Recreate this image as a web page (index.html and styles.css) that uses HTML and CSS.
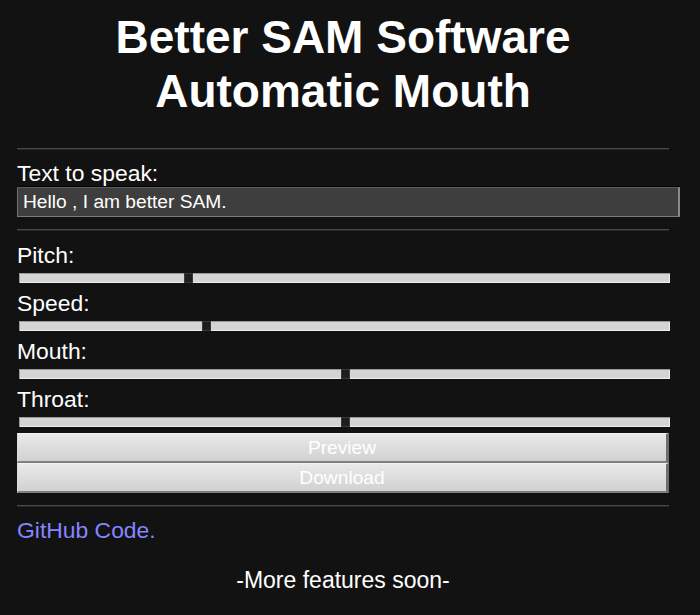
FILE: index.html
```html
<!DOCTYPE html>
<html lang="en">
<head>
<meta charset="utf-8">
<title>Better SAM Software Automatic Mouth</title>
<link rel="stylesheet" href="styles.css">
</head>
<body>
<main class="app">
  <h1 class="title">Better SAM Software<br>Automatic Mouth</h1>
  <hr class="rule rule-top">
  <label class="label label-first" for="text">Text to speak:</label>
  <input class="text-input" id="text" type="text" value="Hello , I am better SAM.">
  <hr class="rule">
  <div class="controls">
    <label class="label" for="pitch">Pitch:</label>
    <input class="slider" id="pitch" type="range" min="0" max="255" step="any" value="65.5">
    <label class="label" for="speed">Speed:</label>
    <input class="slider" id="speed" type="range" min="0" max="255" step="any" value="72.5">
    <label class="label" for="mouth">Mouth:</label>
    <input class="slider" id="mouth" type="range" min="0" max="255" value="128">
    <label class="label" for="throat">Throat:</label>
    <input class="slider" id="throat" type="range" min="0" max="255" value="128">
  </div>
  <div class="buttons">
    <button class="btn btn-preview" type="button">Preview</button>
    <button class="btn" type="button">Download</button>
  </div>
  <hr class="rule">
  <a class="link" href="#">GitHub Code.</a>
  <p class="footer">-More features soon-</p>
</main>
</body>
</html>
```
FILE: styles.css
```css
html, body {
  margin: 0;
  padding: 0;
  background: #121212;
}

body {
  color: #ffffff;
  font-family: "Liberation Sans", Arial, sans-serif;
}

.app {
  width: 652px;
  margin-left: 17px;
  display: flex;
  flex-direction: column;
}

.title {
  margin: 10px 0 0;
  font-size: 46px;
  line-height: 54px;
  font-weight: bold;
  text-align: center;
}

.rule {
  width: 100%;
  height: 0;
  margin: 12px 0 0;
  border: 0;
  border-top: 1px solid #4a4a4a;
  border-bottom: 1px solid #262626;
}

.rule-top {
  margin-top: 30px;
}

.label {
  display: block;
  margin-top: 12px;
  font-size: 22.9px;
  line-height: 24px;
}

.label-first {
  margin-top: 11px;
}

.text-input {
  box-sizing: border-box;
  width: 663px;
  height: 30px;
  margin: 2px 0 0;
  padding: 0 5px;
  background: #3e3e3e;
  color: #ffffff;
  font-family: "Liberation Sans", Arial, sans-serif;
  font-size: 19.2px;
  border-style: solid;
  border-width: 1px 2px 1px 1px;
  border-color: #5c5c5c #8a8a8a #7a7a7a #707070;
  outline: none;
  box-shadow: 0 -1px 0 #050505;
}

.controls {
  display: flex;
  flex-direction: column;
}

.controls .label {
  margin-top: 0;
}

.controls .label:first-child {
  margin-top: 12px;
}

.slider {
  -webkit-appearance: none;
  appearance: none;
  display: block;
  box-sizing: border-box;
  width: 651px;
  height: 10px;
  margin: 6px 0 8px 2px;
  padding: 0;
  background: #d4d4d4;
  border: 0;
  box-shadow: inset 1px 1px 0 #9a9a9a, inset -1px -1px 0 #ececec;
  outline: none;
}

.slider::-webkit-slider-runnable-track {
  height: 10px;
  background: transparent;
  border: 0;
}

.slider::-webkit-slider-thumb {
  -webkit-appearance: none;
  appearance: none;
  box-sizing: border-box;
  width: 9px;
  height: 10px;
  background: #1d1d1d;
  border: 1px solid #3a3a3a;
  border-radius: 0;
}

.controls .slider:last-child {
  margin-bottom: 0;
}

.buttons {
  display: flex;
  flex-direction: column;
  margin-top: 6px;
}

.btn {
  box-sizing: border-box;
  width: 652px;
  height: 30px;
  margin: 0;
  padding: 0;
  background: linear-gradient(#e9e9e9, #d1d1d1);
  color: #ffffff;
  font-family: "Liberation Sans", Arial, sans-serif;
  font-size: 19.2px;
  line-height: 26px;
  text-align: center;
  border-style: solid;
  border-width: 1px 3px 2px 1px;
  border-color: #f2f2f2 #6e6e6e #808080 #dcdcdc;
  cursor: pointer;
}

.link {
  margin-top: 11px;
  font-size: 22.9px;
  line-height: 24px;
  color: #8585ff;
  text-decoration: none;
  align-self: flex-start;
}

.footer {
  margin: 26px 0 0;
  font-size: 23px;
  line-height: 24px;
  text-align: center;
}
```
